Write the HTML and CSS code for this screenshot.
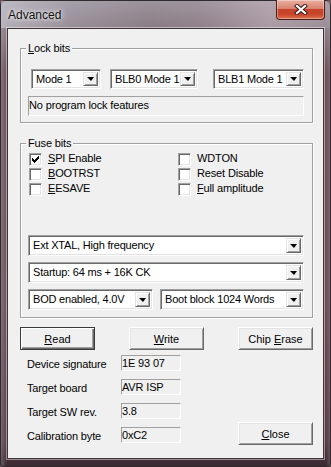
FILE: index.html
```html
<!DOCTYPE html>
<html lang="en">
    <head>
        <meta charset="utf-8">
        <title>Advanced</title>
        <link rel="stylesheet" href="styles.css">
    </head>
    <body>
        <div class="window">
            <div class="titlebar">
                <span class="title">Advanced</span>
                <button class="close-x" title="Close">
                    <svg width="14" height="11" viewBox="0 0 14 11">
                        <path d="M3 2 L11 9 M11 2 L3 9" stroke="#3b1c1c" stroke-width="4.2" stroke-linecap="square"/>
                        <path d="M3 2 L11 9 M11 2 L3 9" stroke="#fff" stroke-width="2.2" stroke-linecap="square"/>
                    </svg>
                </button>
            </div>

            <div class="client">
                <!-- lock bits -->
                <fieldset class="group lock">
                    <legend><u>L</u>ock bits</legend>
                    <div class="lock-row">
                        <div class="combo short mode"><span class="combo-text">Mode 1</span><span class="drop"></span></div>
                        <div class="combo short blb0"><span class="combo-text">BLB0 Mode 1</span><span class="drop"></span></div>
                        <div class="combo short blb1"><span class="combo-text">BLB1 Mode 1</span><span class="drop"></span></div>
                    </div>
                    <div class="static lock-info">No program lock features</div>
                </fieldset>

                <!-- fuse bits -->
                <fieldset class="group fuse">
                    <legend>Fuse bits</legend>
                    <div class="checks">
                        <div class="check"><span class="box"><svg width="7" height="7" viewBox="0 0 7 7" shape-rendering="crispEdges"><path d="M0 2H1V3H2V4H3V3H4V2H5V1H6V0H7V3H6V4H5V5H4V6H3V7H2V6H1V5H0Z" fill="#000"/></svg></span><span><u>S</u>PI Enable</span></div>
                        <div class="check"><span class="box"></span><span><u>B</u>OOTRST</span></div>
                        <div class="check"><span class="box"></span><span><u>E</u>ESAVE</span></div>
                        <div class="check"><span class="box"></span><span>WDTON</span></div>
                        <div class="check"><span class="box"></span><span>Reset Disable</span></div>
                        <div class="check"><span class="box"></span><span><u>F</u>ull amplitude</span></div>
                    </div>
                    <div class="combo wide clock"><span class="combo-text">Ext XTAL, High frequency</span><span class="drop"></span></div>
                    <div class="combo wide startup"><span class="combo-text">Startup: 64 ms + 16K CK</span><span class="drop"></span></div>
                    <div class="bod-row">
                        <div class="combo bod"><span class="combo-text">BOD enabled, 4.0V</span><span class="drop"></span></div>
                        <div class="combo boot"><span class="combo-text">Boot block 1024 Words</span><span class="drop"></span></div>
                    </div>
                </fieldset>

                <div class="actions">
                    <button class="btn default"><u>R</u>ead</button>
                    <button class="btn"><u>W</u>rite</button>
                    <button class="btn">Chip <u>E</u>rase</button>
                </div>

                <div class="bottom">
                    <div class="info">
                        <div class="info-row"><span class="info-label">Device signature</span><span class="static field">1E 93 07</span></div>
                        <div class="info-row"><span class="info-label">Target board</span><span class="static field">AVR ISP</span></div>
                        <div class="info-row"><span class="info-label">Target SW rev.</span><span class="static field">3.8</span></div>
                        <div class="info-row"><span class="info-label">Calibration byte</span><span class="static field">0xC2</span></div>
                    </div>
                    <button class="btn close"><u>C</u>lose</button>
                </div>
            </div>
        </div>
    </body>
</html>
```

FILE: styles.css
```css
body {
    margin: 0;
    padding: 0;
    background: #6b5058;
    font-family: "Liberation Sans", Arial, sans-serif;
    font-size: 11px;
    letter-spacing: -0.15px;
    color: #000;
}

u {
    text-decoration: underline;
    text-underline-offset: 1px;
}

/* window frame */
.window {
    width: 331px;
    height: 467px;
    box-sizing: border-box;
    border: 1px solid #2f2a2d;
    border-radius: 6px 6px 3px 3px;
    padding: 0 6px 7px 6px;
    background:
        linear-gradient(90deg, rgba(180,180,195,.35) 0, rgba(0,0,0,0) 6px, rgba(0,0,0,0) 325px, rgba(170,150,160,.3) 100%),
        linear-gradient(180deg, #a29ca6 0, #8f838c 24px, #6e4f58 70px, #6b4d56 300px, #573b45 440px, #3a2830 467px);
}

.titlebar {
    height: 27px;
    display: flex;
    align-items: center;
    margin: 0 -6px;
    padding: 0 6px;
    background: linear-gradient(90deg, rgba(205,205,215,.6) 0, rgba(170,165,175,.35) 22%, rgba(120,95,100,.15) 45%, rgba(150,120,130,.2) 60%, rgba(200,180,190,.5) 82%, rgba(175,160,168,.4) 100%);
}

.title {
    padding-left: 1px;
    font-size: 12px;
    letter-spacing: 0;
    color: #111;
    text-shadow: 0 0 6px rgba(255,255,255,.9), 0 0 3px rgba(255,255,255,.8);
}

.close-x {
    margin: -1px -1px 0 auto;
    align-self: flex-start;
    width: 49px;
    height: 20px;
    padding: 0;
    box-sizing: border-box;
    border: 1px solid #4a1f1a;
    border-top: 0;
    border-radius: 0 0 4px 4px;
    background: linear-gradient(180deg, #e9b0a2 0, #d9826e 45%, #c5442c 50%, #c9452b 75%, #e0704e 100%);
    box-shadow: inset 0 0 0 1px rgba(255,255,255,.35);
    display: flex;
    align-items: center;
    justify-content: center;
}

.client {
    height: 431px;
    box-sizing: border-box;
    border: 1px solid #403338;
    box-shadow: 0 0 0 1px rgba(255,255,255,.45);
    background: #f0f0f0;
    padding: 0 10px 0 12px;
}

/* group boxes */
.group {
    margin: 0;
    padding: 0;
    border: 1px solid #a0a0a0;
    box-shadow: 1px 1px 0 #fff, inset 1px 1px 0 #fff;
}

.group legend {
    margin-left: 5px;
    padding: 0 2px;
    line-height: 13px;
    background: #f0f0f0;
}

.lock {
    margin-top: 13px;
    padding-bottom: 6px;
}

.fuse {
    margin-top: 14px;
    padding-bottom: 7px;
}

/* combo boxes */
.combo {
    display: flex;
    height: 21px;
    box-sizing: border-box;
    padding: 2px;
    background: #fff;
    border: 1px solid;
    border-color: #a0a0a0 #fff #fff #a0a0a0;
    box-shadow: inset 1px 1px 0 #696969, inset -1px -1px 0 #e3e3e3;
}

.combo.short {
    height: 20px;
}

.combo-text {
    flex: 1;
    min-width: 0;
    padding-left: 2px;
    letter-spacing: -0.2px;
    white-space: nowrap;
    overflow: hidden;
    line-height: 15px;
}

.drop {
    width: 15px;
    box-sizing: border-box;
    background: #f0f0f0;
    border: 1px solid;
    border-color: #e3e3e3 #696969 #696969 #e3e3e3;
    box-shadow: inset 1px 1px 0 #fff, inset -1px -1px 0 #a0a0a0;
    display: flex;
    align-items: center;
    justify-content: center;
}

.drop:after {
    content: "";
    width: 0;
    height: 0;
    border-left: 4px solid transparent;
    border-right: 3px solid transparent;
    border-top: 4px solid #000;
}

.lock-row {
    display: flex;
    margin: 14px 0 0 10px;
}

.mode { width: 70px; }
.blb0 { width: 88px; margin-left: 9px; }
.blb1 { width: 91px; margin-left: 15px; }

.static {
    box-sizing: border-box;
    border: 1px solid;
    border-color: #a0a0a0 #fff #fff #a0a0a0;
    background: #f0f0f0;
    white-space: nowrap;
}

.lock-info {
    width: 276px;
    height: 20px;
    margin: 7px 0 0 7px;
    line-height: 17px;
}

/* check boxes */
.checks {
    display: grid;
    grid-template-columns: 149px 1fr;
    grid-template-rows: repeat(3, 15px);
    grid-auto-flow: column;
    margin: 2px 0 0 8px;
}

.check {
    display: flex;
    align-items: flex-start;
    line-height: 13px;
}

.box {
    width: 13px;
    height: 13px;
    margin: 1px 6px 0 0;
    box-sizing: border-box;
    background: #fff;
    border: 1px solid;
    border-color: #a0a0a0 #fff #fff #a0a0a0;
    box-shadow: inset 1px 1px 0 #696969, inset -1px -1px 0 #e3e3e3;
    display: flex;
    align-items: center;
    justify-content: center;
}

.combo.wide {
    width: 276px;
    margin-left: 7px;
}

.clock { margin-top: 38px; }
.startup { margin-top: 6px; }

.bod-row {
    display: flex;
    gap: 7px;
    margin: 6px 0 0 7px;
}

.bod { width: 125px; }
.boot { width: 144px; }

/* push buttons */
.btn {
    width: 75px;
    height: 23px;
    padding: 0;
    box-sizing: border-box;
    font: inherit;
    color: #000;
    background: #f0f0f0;
    border: 1px solid;
    border-color: #fff #696969 #696969 #fff;
    box-shadow: inset 1px 1px 0 #e3e3e3, inset -1px -1px 0 #a0a0a0;
}

.btn.default {
    border-color: #3a3a3a;
    box-shadow: inset 1px 1px 0 #fff, inset -1px -1px 0 #696969, inset -2px -2px 0 #a0a0a0;
}

.actions {
    display: flex;
    justify-content: space-between;
    margin-top: 9px;
}

.bottom {
    display: flex;
    margin-top: 5px;
}

.info {
    display: flex;
    flex-direction: column;
    gap: 8px;
    padding-left: 7px;
}

.info-row {
    display: flex;
    align-items: center;
    height: 16px;
}

.info-label {
    width: 94px;
    line-height: 16px;
    padding-top: 2px;
}

.field {
    width: 60px;
    height: 16px;
    line-height: 14px;
}

.btn.close {
    margin: 67px 0 0 auto;
}
```
